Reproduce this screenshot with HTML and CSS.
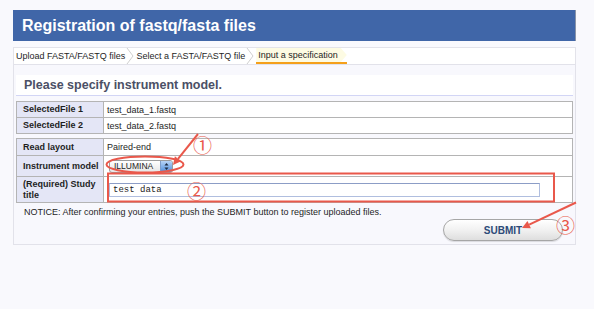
FILE: index.html
```html
<!DOCTYPE html>
<html lang="en">
<head>
    <meta charset="UTF-8">
    <title>Registration of fastq/fasta files</title>
    <link rel="stylesheet" href="styles.css">
</head>
<body>
    <div class="page">
        <div class="title-bar">
            <h1>Registration of fastq/fasta files</h1>
        </div>

        <!-- step trail -->
        <div class="steps">
            <span class="step">Upload FASTA/FASTQ files</span>
            <svg class="step-sep" width="10" height="16" viewBox="0 0 10 16"><polyline points="2,0 8,8 2,16"></polyline></svg>
            <span class="step">Select a FASTA/FASTQ file</span>
            <svg class="step-sep" width="10" height="16" viewBox="0 0 10 16"><polyline points="2,0 8,8 2,16"></polyline></svg>
            <span class="step step-current"><span class="step-bg">Input a specification</span></span>
        </div>

        <div class="panel">
            <h2 class="panel-head">Please specify instrument model.</h2>

            <table class="spec">
                <tr class="row-16">
                    <td class="spec-label">SelectedFile 1</td>
                    <td class="spec-value">test_data_1.fastq</td>
                </tr>
                <tr class="row-16">
                    <td class="spec-label">SelectedFile 2</td>
                    <td class="spec-value">test_data_2.fastq</td>
                </tr>
            </table>

            <table class="spec">
                <tr class="row-17">
                    <td class="spec-label">Read layout</td>
                    <td class="spec-value">Paired-end</td>
                </tr>
                <tr class="row-21">
                    <td class="spec-label">Instrument model</td>
                    <td class="spec-value">
                        <span class="model-select">
                            <span class="model-text">ILLUMINA</span>
                            <span class="model-arrows">
                                <svg width="11" height="11" viewBox="0 0 11 11"><polygon points="3.5,4.5 5.5,2 7.5,4.5"></polygon><polygon points="3.5,6.5 5.5,9 7.5,6.5"></polygon></svg>
                            </span>
                        </span>
                    </td>
                </tr>
                <tr class="row-26">
                    <td class="spec-label">(Required) Study title</td>
                    <td class="spec-value"><input class="title-input" type="text" value="test data"></td>
                </tr>
            </table>

            <p class="notice">NOTICE: After confirming your entries, push the SUBMIT button to register uploaded files.</p>

            <div class="actions">
                <button class="submit" type="button">SUBMIT</button>
            </div>
        </div>
    </div>

    <!-- red annotations drawn over the screenshot -->
    <svg class="marks" width="594" height="309" viewBox="0 0 594 309">
        <ellipse cx="145" cy="164.5" rx="38.5" ry="8" ></ellipse>
        <rect x="108" y="173.5" width="446" height="28"></rect>
        <line x1="198" y1="134" x2="178" y2="158.8"></line>
        <polygon class="head" points="173,165 181.1,161.3 174.9,156.3"></polygon>
        <line x1="576" y1="202.5" x2="529.2" y2="224.6"></line>
        <polygon class="head" points="522,228 530.9,228.2 527.5,221"></polygon>
    </svg>
    <span class="mark-num mark-1">①</span>
    <span class="mark-num mark-2">②</span>
    <span class="mark-num mark-3">③</span>
</body>
</html>
```

FILE: styles.css
```css
:root {
    --blue: #4066a8;
    --label-bg: #e4e6f6;
    --cell-border: #b4b4b4;
    --mark: #e9584b;
}

body {
    margin: 0;
    background-color: #f9f9fd;
    font-family: 'Liberation Sans', Arial, sans-serif;
    font-size: 9px;
    color: #1e1e1e;
    position: relative;
    min-height: 309px;
}

.page {
    width: 563px;
    margin: 10px 0 0 13px;
}

.title-bar {
    height: 31px;
    background-color: var(--blue);
    border-right: 1px solid #8a94a8;
    box-sizing: border-box;
}

h1 {
    margin: 0;
    padding-left: 9px;
    font-size: 16px;
    font-weight: bold;
    line-height: 31px;
    color: #ffffff;
}

/* step trail */
.steps {
    margin-top: 6px;
    height: 17px;
    display: flex;
    align-items: flex-start;
    background-color: #ffffff;
    border: 1px solid #e3e3ea;
    border-bottom: none;
    box-sizing: border-box;
    padding-left: 2px;
}

.step {
    line-height: 16px;
    white-space: nowrap;
}

.step-sep {
    flex: none;
    margin: 0 1px 0 0;
}

.step-sep polyline {
    fill: none;
    stroke: #cfcfcf;
    stroke-width: 1;
}

.step-current {
    border-bottom: 2px solid #f5a01a;
    height: 16px;
    box-sizing: border-box;
}

.step-bg {
    display: block;
    padding: 0 9px 0 2px;
    line-height: 14px;
    background-color: #fdfbe3;
    clip-path: polygon(0 0, calc(100% - 6px) 0, 100% 50%, calc(100% - 6px) 100%, 0 100%);
}

/* main panel */
.panel {
    border: 1px solid #e2e2ea;
    background-color: #f8f8fd;
    padding: 10px 2px 3px 2px;
}

.panel-head {
    margin: 0;
    height: 20px;
    padding-left: 8px;
    background-color: #ffffff;
    border-bottom: 1px solid #d2d5f5;
    font-size: 12.5px;
    font-weight: bold;
    line-height: 20px;
    color: #4b5066;
}

.spec {
    width: 557px;
    border-collapse: collapse;
    border: 1px solid #a8a8a8;
    margin-top: 5px;
    background-color: #ffffff;
}

.spec + .spec {
    margin-top: 4px;
}

.spec td {
    border: 1px solid var(--cell-border);
    padding: 0;
    vertical-align: middle;
}

.row-16 { height: 16px; }
.row-17 { height: 17px; }
.row-21 { height: 21px; }
.row-26 { height: 26px; }

.spec-label {
    width: 80px;
    padding: 0 0 0 6px !important;
    background-color: var(--label-bg);
    font-weight: bold;
    line-height: 10.5px;
}

.spec-value {
    padding-left: 3px !important;
}

.model-select {
    display: inline-flex;
    align-items: center;
    width: 62px;
    height: 11px;
    margin-left: 2px;
    border: 1px solid #9c9c9c;
    border-radius: 3px;
    background: linear-gradient(#ffffff, #e6e6e6);
    vertical-align: middle;
    overflow: hidden;
}

.model-text {
    flex: 1;
    padding-left: 4px;
    font-size: 8.5px;
    line-height: 11px;
}

.model-arrows {
    width: 11px;
    height: 11px;
    background: linear-gradient(#b8d4f6, #4f8fdc);
    border-left: 1px solid #7d9cc8;
}

.model-arrows svg {
    display: block;
}

.model-arrows polygon {
    fill: #1d2a40;
}

.title-input {
    display: block;
    width: 431px;
    height: 14px;
    margin: 0 0 0 2px;
    padding: 0 3px;
    box-sizing: border-box;
    border: 1px solid #b0bedf;
    border-top-color: #8c9dc6;
    font-family: 'Liberation Mono', 'Courier New', monospace;
    font-size: 9px;
    color: #222;
}

.notice {
    margin: 4px 0 0 8px;
    line-height: 11px;
}

.actions {
    display: flex;
    justify-content: flex-end;
    margin-top: 1px;
    padding-right: 10px;
}

.submit {
    width: 120px;
    height: 22px;
    border: 1px solid #a6a6a6;
    border-radius: 11px;
    background: linear-gradient(#ffffff, #f1f1f1 50%, #dedede);
    box-shadow: 0 1px 1px rgba(0, 0, 0, 0.12);
    font-family: 'Liberation Sans', Arial, sans-serif;
    font-size: 10px;
    font-weight: bold;
    color: #2c4a78;
    padding: 0;
}

/* annotations */
.marks {
    position: absolute;
    left: 0;
    top: 0;
    pointer-events: none;
}

.marks ellipse,
.marks rect,
.marks line {
    fill: none;
    stroke: var(--mark);
    stroke-width: 2;
}

.marks .head {
    fill: var(--mark);
}

.mark-num {
    position: absolute;
    font-family: 'Noto Sans CJK JP', sans-serif;
    font-size: 19px;
    line-height: 19px;
    color: var(--mark);
}

.mark-1 { left: 193px; top: 135px; }
.mark-2 { left: 187px; top: 181px; }
.mark-3 { left: 556px; top: 215px; }
```
